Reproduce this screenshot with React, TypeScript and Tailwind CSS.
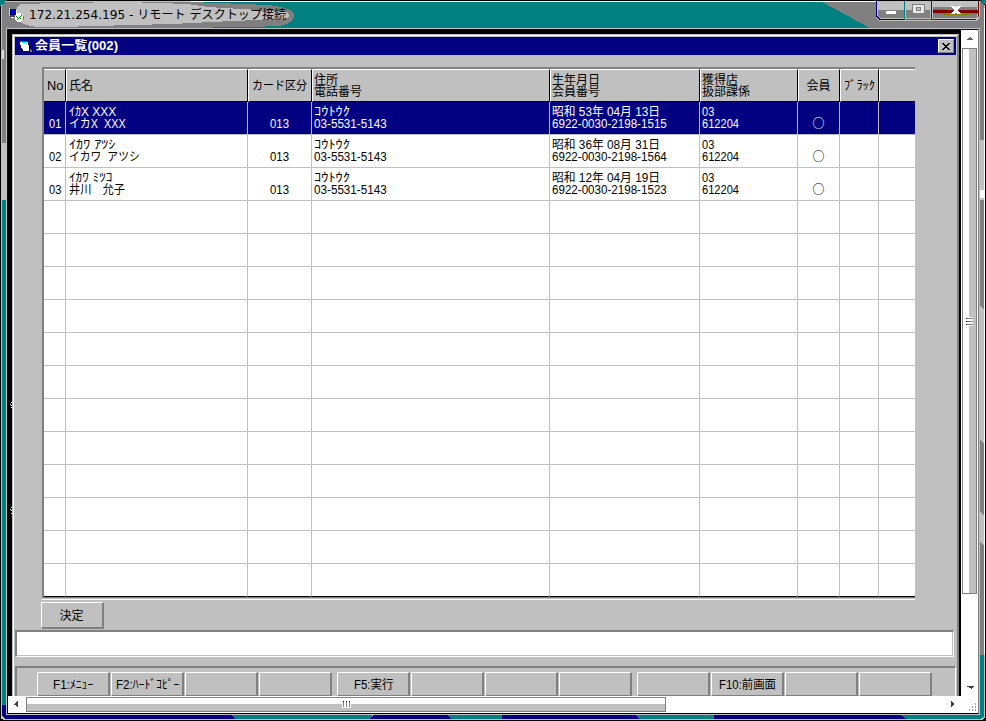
import { useLayoutEffect, useRef, useState, type ReactNode } from "react";

/* Text squeezed or stretched horizontally to a fixed advance width. */
function Fit({ w, children }: { w: number; children: string }) {
  const ref = useRef<HTMLSpanElement>(null);
  const [scale, setScale] = useState(1);
  useLayoutEffect(() => {
    if (ref.current && ref.current.offsetWidth) {
      setScale(w / ref.current.offsetWidth);
    }
  }, [w, children]);
  return (
    <span className="block whitespace-pre" style={{ width: w }}>
      <span ref={ref} className="inline-block origin-left whitespace-pre align-top" style={{ transform: `scaleX(${scale})` }}>
        {children}
      </span>
    </span>
  );
}

function Backdrop() {
  return (
    <svg className="absolute inset-0" width="986" height="721" shapeRendering="crispEdges">
      <rect width="986" height="721" fill="#000" />
      <path d="M0 0h6L0 6zM986 0h-6l6 6z" fill="#008080" />
      <path d="M1 719V6l4-5h976l4 5v711l-3 3H4z" fill="#c0c0c0" />
      <rect x="190" y="1" width="790" height="1" fill="#fff" />
      <rect x="2" y="2" width="982" height="26" fill="#008080" />
      <path d="M2 28V5l3-3h185l28 1 50 2q26 3 26 10 0 8-14 11l-30 1H213v1z" fill="#808080" />
      <path d="M20 4l40-1 66-1 62 2 20 3 50 3 28 2q8 4-2 7l-52 2-60 3-40 1-72 2-24 0-10-2-6-3-4-5-6-2 4-3z" fill="#c0c0c0" />
      <path d="M822 2h158l4 4v22H870z" fill="#808080" />
      <path d="M2 28h4v115H2z" fill="#808080" />
      <path d="M2 50h2v9H2z" fill="#e0dede" />
      <path d="M2 149h4v50H2z" fill="#c6bfc0" />
      <path d="M2 200h4v505H2z" fill="#008080" />
      <path d="M2 705h4v10h225l4 4H5l-3-3z" fill="#000080" />
      <path d="M232 715h140v4H235z" fill="#008080" />
      <path d="M373 715h74l4 4h-81z" fill="#000080" />
      <path d="M447 715h55v4h-51z" fill="#008080" />
      <path d="M502 715h134l3 4H502z" fill="#000080" />
      <path d="M636 715h78v4h-75z" fill="#008080" />
      <path d="M714 715h186l7 4H714z" fill="#000080" />
      <path d="M900 715h84l-3 4h-74z" fill="#008080" />
      <path d="M980 24h4v116h-4zM980 200h4v110l-4-4zM980 440l4 4v72l-4-5zM980 542l4 4v109h-4z" fill="#808080" />
      <path d="M980 190h4v8h-4zM984 8h1v647h-1z" fill="#fff" />
      <path d="M980 655h4v62l-4 2z" fill="#008080" />
    </svg>
  );
}

function RemoteIcon() {
  return (
    <svg width="16" height="16" viewBox="0 0 16 16" shapeRendering="crispEdges">
      <path d="M1 1h1v8H1z" fill="#c0c0ff" />
      <path d="M2 2h6v6H2z" fill="#000080" />
      <path d="M3 2h4v4H3z" fill="#0000d0" />
      <path d="M8 3h1v4H8z" fill="#fff" />
      <path d="M2 8h5v2H2z" fill="#404060" />
      <path d="M3 10h3v1H3z" fill="#fff" />
      <path d="M9 6h4v1h1v1h1v5h-1v1h-1v1H9v-1H8v-1H7V8h1V7h1z" fill="#fff" />
      <path d="M9 15h4v1H9zM15 9h1v4h-1z" fill="#808080" />
      <path d="M8 9h1v1H8zM9 10h1v1H9zM10 11h1v1h-1zM9 12h1v1H9zM13 8h1v1h-1zM12 9h1v1h-1zM11 10h1v1h-1zM12 11h1v1h-1z" fill="#008000" />
    </svg>
  );
}

function FormIcon() {
  return (
    <svg width="13" height="12" viewBox="0 0 13 12" shapeRendering="crispEdges">
      <path d="M1 2h8v1h1v3h1v6H4v-1H3V8H2V5H1z" fill="#000" />
      <path d="M11 9h1v1h1v2h-2z" fill="#808080" />
      <path d="M1 2h8v3h1v6H4V9H3V8H2V5H1z" fill="#fff" />
      <path d="M1 1h7v1H1z" fill="#008080" />
      <path d="M3 2h5v1H3z" fill="#00ffff" />
    </svg>
  );
}

function CaptionButtons() {
  return (
    <svg width="104" height="21" viewBox="0 0 104 21" shapeRendering="crispEdges">
      <path d="M0 1h104v16l-3 4H3l-3-4z" fill="#c0c0c0" />
      <path d="M0 1h1v15l3 3h24v1H3l-3-3z" fill="#000080" />
      <path d="M28 19h28v1H28z" fill="#008080" />
      <path d="M2 10h26v8H4l-2-2zM30 10h24v8H30z" fill="#808080" />
      <path d="M28 1h1v18h-1z" fill="#008080" />
      <path d="M55 1h1v18h-1z" fill="#800000" />
      <path d="M57 7h44v11H57z" fill="#808080" />
      <path d="M57 10h45v3H57z" fill="#800000" />
      <path d="M57 9h14v1H57zM68 14h25v1H68zM57 13h14v1H57zM88 13h14v1H88z" fill="#808000" />
      <path d="M56 19h44v1H56zM102 1h1v16h-1z" fill="#800000" />
      <path d="M10 11h10v3H10z" fill="#fff" />
      <path d="M36 4h13v10H36z" fill="#808080" />
      <path d="M37 5h11v8H37zM40 7v4h5V7z" fill="#e8e8e8" fillRule="evenodd" />
      <path d="M41 8h3v2h-3z" fill="#c0c0c0" />
      <path d="M75 6h4l1 2 1-2h4l-3 4 3 4h-4l-1-2-1 2h-4l3-4z" fill="#fff" />
    </svg>
  );
}

const columns = [
  "w-[22px]", "w-[182px]", "w-[64px]", "w-[238px]", "w-[150px]", "w-[98px]", "w-[42px]", "w-[39px]", "w-[36px]",
];

type Line = [string, number];

const headers: { lines: Line[]; center?: boolean }[] = [
  { lines: [["No", 16]], center: true },
  { lines: [["氏名", 24]] },
  { lines: [["カード区分", 55]], center: true },
  { lines: [["住所", 24], ["電話番号", 48]] },
  { lines: [["生年月日", 48], ["会員番号", 48]] },
  { lines: [["獲得店", 36], ["扱部課係", 48]] },
  { lines: [["会員", 24]], center: true },
  { lines: [["ﾌﾞﾗｯｸ", 31]], center: true },
  { lines: [] },
];

const members: { no: string; kana: Line; name: Line; birth: string; card: string }[] = [
  { no: "01", kana: ["ｲｶX XXX", 47], name: ["イカX  XXX", 57], birth: "昭和 53年 04月 13日", card: "6922-0030-2198-1515" },
  { no: "02", kana: ["ｲｶﾜ ｱﾂｼ", 46], name: ["イカワ  アツシ", 71], birth: "昭和 36年 08月 31日", card: "6922-0030-2198-1564" },
  { no: "03", kana: ["ｲｶﾜ ﾐﾂｺ", 43], name: ["井川　允子", 56], birth: "昭和 12年 04月 19日", card: "6922-0030-2198-1523" },
];

function Cell({ col, selected, last, children, center }: { col: number; selected: boolean; last: boolean; center?: boolean; children?: ReactNode }) {
  return (
    <div
      className={`${columns[col]} h-[33px] shrink-0 border-b leading-[12px] ${last ? "border-b-black" : "border-b-[#c0c0c0]"} ${col < 8 ? "border-r border-r-[#c0c0c0]" : ""} ${selected ? "bg-[#000080] text-white" : "bg-white"} ${center ? "flex flex-col items-center pt-[16px]" : "pt-[4px] pl-[2px]"}`}
    >
      {children}
    </div>
  );
}

function Grid() {
  return (
    <div className="ml-[27px] w-[873px] border-t-2 border-l-2 border-[#808080]">
      <div className="flex h-[33px]">
        {headers.map((h, i) => (
          <div
            key={i}
            className={`${columns[i]} flex shrink-0 flex-col justify-center border-t border-b border-t-white border-b-black leading-[12px] ${i < 8 ? "border-r border-r-black" : ""} ${i > 0 ? "border-l border-l-white" : ""} ${h.center ? (i > 0 ? "items-center pr-px" : "items-center pl-px") : i === 1 ? "pl-[2px]" : "pl-px"}`}
          >
            {h.lines.map(([t, w]) => (
              <Fit key={t} w={w}>{t}</Fit>
            ))}
          </div>
        ))}
      </div>
      {Array.from({ length: 15 }, (_, r) => {
        const m = members[r];
        const p = { selected: r === 0, last: r === 14 };
        return (
          <div key={r} className="flex">
            <Cell col={0} center {...p}>{m && <Fit w={12}>{m.no}</Fit>}</Cell>
            <Cell col={1} {...p}>{m && <div className="pl-px"><Fit w={m.kana[1]}>{m.kana[0]}</Fit><Fit w={m.name[1]}>{m.name[0]}</Fit></div>}</Cell>
            <Cell col={2} center {...p}>{m && <Fit w={19}>013</Fit>}</Cell>
            <Cell col={3} {...p}>{m && <><Fit w={36}>ｺｳﾄｳｸ</Fit><Fit w={73}>03-5531-5143</Fit></>}</Cell>
            <Cell col={4} {...p}>{m && <><Fit w={108}>{m.birth}</Fit><Fit w={115}>{m.card}</Fit></>}</Cell>
            <Cell col={5} {...p}>{m && <><Fit w={12}>03</Fit><Fit w={37}>612204</Fit></>}</Cell>
            <Cell col={6} center {...p}>
              {m && (
                <div className="-mt-px font-['Noto_Sans_CJK_JP',sans-serif] font-medium">
                  <Fit w={12}>○</Fit>
                </div>
              )}
            </Cell>
            <Cell col={7} {...p} />
            <Cell col={8} {...p} />
          </div>
        );
      })}
      <div className="-ml-[2px] h-[3px] border-t border-b border-t-[#808080] border-b-white bg-[#c0c0c0]" />
    </div>
  );
}

const keyGroups: (Line | null)[][] = [
  [["F1:ﾒﾆｭｰ", 40], ["F2:ﾊｰﾄﾞｺﾋﾟｰ", 63], null, null],
  [["F5:実行", 39], null, null, null],
  [null, ["F10:前画面", 57], null, null],
];

export default function App() {
  return (
    <div className="relative h-[721px] w-[986px] overflow-hidden bg-black font-['Liberation_Sans','Noto_Sans_CJK_JP',sans-serif] text-[12px] text-black">
      <Backdrop />
      <div className="relative flex h-full flex-col">
        <header className="flex h-[28px] shrink-0 items-start justify-between pr-[6px] pl-[8px]">
          <div className="flex items-center gap-[5px] pt-[7px]">
            <RemoteIcon />
            <div className="font-['DejaVu_Sans','Noto_Sans_CJK_JP',sans-serif] text-[12px] leading-[16px]">
              <Fit w={257}>172.21.254.195 - リモート デスクトップ接続</Fit>
            </div>
          </div>
          <CaptionButtons />
        </header>

        <div className="ml-[6px] h-[687px] w-[974px] border border-[#c0c0c0]">
          <div className="h-full border border-[#000080] border-r-[#808080] border-b-black bg-white">
            <div className="flex h-[666px]">
              <div className="w-[953px] bg-black pt-[4px] pr-[2px] pl-[4px]">
                <div className="h-full border-t border-r border-l border-t-[#c0c0c0] border-r-[#808080] border-l-[#c0c0c0]">
                  <div className="flex h-full flex-col overflow-hidden border-t border-r border-l border-t-white border-r-[#808080] border-l-white bg-[#c0c0c0] px-px pt-px">
                    <div className="flex h-[18px] shrink-0 items-center bg-[#000080] pr-[2px] pl-[4px] font-bold text-white">
                      <FormIcon />
                      <div className="ml-[3px] flex-1 leading-[16px]">
                        <Fit w={83}>会員一覧(002)</Fit>
                      </div>
                      <div className="flex h-[14px] w-[16px] items-center justify-center border border-t-white border-r-[#808080] border-b-[#808080] border-l-white bg-[#c0c0c0]">
                        <svg width="8" height="7" viewBox="0 0 8 7" shapeRendering="crispEdges">
                          <path d="M0 0h2v1h1v1h2V1h1V0h2v1H7v1H6v1H5v1h1v1h1v1h1v1H6V6H5V5H3v1H2v1H0V6h1V5h1V4h1V3H2V2H1V1H0z" fill="#000" />
                        </svg>
                      </div>
                    </div>

                    <div className="mt-[12px] h-[533px] shrink-0">
                      <Grid />
                    </div>

                    <button className="mt-[2px] ml-[26px] flex h-[27px] w-[63px] shrink-0 items-center justify-center border-t border-r-2 border-b-2 border-l border-t-white border-r-[#808080] border-b-[#808080] border-l-white pt-px pr-px leading-[12px]">
                      <Fit w={24}>決定</Fit>
                    </button>

                    <div className="mt-px h-[27px] w-[939px] shrink-0 border-t-2 border-r border-b border-l-2 border-t-[#808080] border-r-white border-b-white border-l-[#808080]">
                      <div className="h-full border-r border-b border-[#c0c0c0] bg-white" />
                    </div>

                    <div className="mt-[9px] flex h-[30px] shrink-0 gap-[5px] border-t-2 border-r border-l-2 border-t-[#808080] border-r-white border-l-[#808080] pt-[4px] pl-[20px]">
                      {keyGroups.map((group, g) => (
                        <div key={g} className="flex gap-px">
                          {group.map((label, i) => (
                            <button key={i} className="flex h-[24px] w-[73px] items-center justify-center border-t border-r-2 border-b border-l border-t-white border-r-[#808080] border-b-[#808080] border-l-white pt-px leading-[12px]">
                              {label && <Fit w={label[1]}>{label[0]}</Fit>}
                            </button>
                          ))}
                        </div>
                      ))}
                    </div>
                  </div>
                </div>
              </div>

              <div className="flex w-[17px] flex-col items-center bg-white">
                <svg width="17" height="18" shapeRendering="crispEdges">
                  <path d="M9 7h1v1h1v1h1v1H6V9h1V8h2z" fill="#606060" />
                </svg>
                <div className="flex h-[546px] w-[15px] items-center justify-center border border-[#808080] bg-linear-to-r from-white from-[46%] to-[#c0c0c0] to-[46%]">
                  <svg width="7" height="9" shapeRendering="crispEdges">
                    <path d="M0 0h7v9H0z" fill="#fff" />
                    <path d="M0 1h7v1H0zM0 4h7v1H0zM0 7h7v1H0z" fill="#808080" />
                    <path d="M0 1h1v1H0zM0 4h1v1H0zM0 7h1v1H0z" fill="#000" />
                  </svg>
                </div>
                <svg className="mt-auto" width="17" height="18" shapeRendering="crispEdges">
                  <path d="M6 8h7v1h-1v1h-1v1h-1v-1H8V9H6z" fill="#404040" />
                </svg>
              </div>
            </div>

            <div className="flex h-[17px] items-center bg-white">
              <svg width="18" height="17" shapeRendering="crispEdges">
                <path d="M6 8h1V7h1V6h1V5h1v6H9v-1H8V9H6z" fill="#404040" />
              </svg>
              <div className="flex h-[15px] w-[640px] items-center justify-center border border-[#808080] bg-linear-to-b from-white from-[46%] to-[#c0c0c0] to-[46%]">
                <svg width="9" height="7" shapeRendering="crispEdges">
                  <path d="M0 0h9v7H0z" fill="#fff" />
                  <path d="M1 0h1v6H1zM4 0h1v6H4zM7 0h1v6H7z" fill="#808080" />
                  <path d="M1 0h1v1H1zM4 0h1v1H4zM7 0h1v1H7z" fill="#000" />
                </svg>
              </div>
              <svg className="ml-auto" width="34" height="17" shapeRendering="crispEdges">
                <path d="M7 5h1v1h1v1h1v2H9v1H8v1H7z" fill="#404040" />
                <path d="M31 7h1v2h-1zM28 10h1v2h-1zM31 10h1v2h-1zM25 13h1v2h-1zM28 13h1v2h-1zM31 13h1v2h-1z" fill="#a0a0a0" />
              </svg>
            </div>
          </div>
        </div>
      </div>
      <svg className="absolute top-[402px] left-[10px]" width="2" height="114" shapeRendering="crispEdges">
        <path d="M1 0h1v1H1zM0 2h1v1H0zM1 3h1v1H1zM1 5h1v1H1zM1 105h1v1H1zM0 107h1v1H0zM1 108h1v1H1zM1 111h1v1H1z" fill="#fff" />
      </svg>
    </div>
  );
}
